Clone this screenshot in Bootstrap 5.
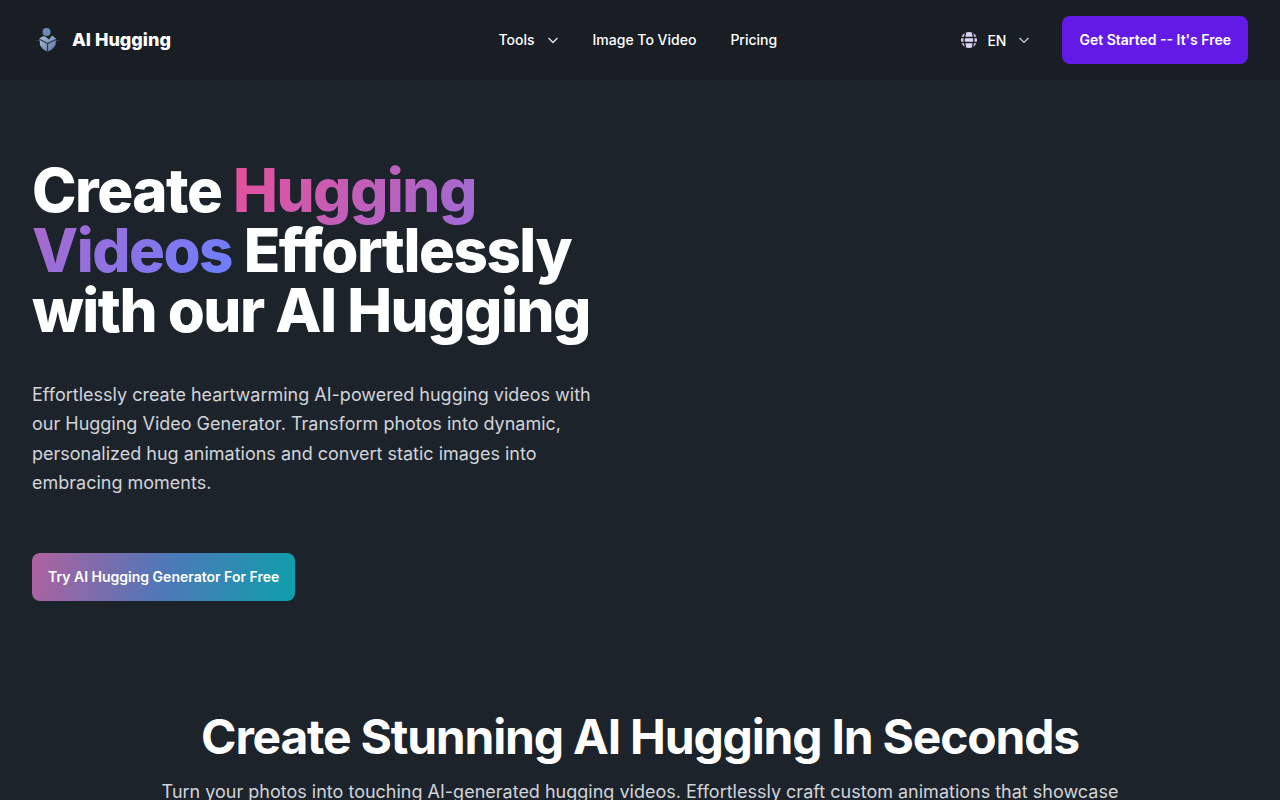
<!doctype html>
<html lang="en">
<head>
<meta charset="utf-8">
<title>AI Hugging</title>
<link rel="stylesheet" href="https://cdn.jsdelivr.net/npm/bootstrap@5.3.0/dist/css/bootstrap.min.css">
<style>
html,body{height:800px;overflow:hidden}
body{background:#1d232a;font-family:Inter,"Liberation Sans",sans-serif;color:#fff}
.topbar{height:80px;background:#191e25;padding:0 32px}
.brandname{font-size:18px;font-weight:800;line-height:28px;color:#fff}
.brandlink{gap:12px;text-decoration:none;width:139px}
.menuwrap{gap:34px;margin-left:327.5px}
.menuitem{font-size:14px;font-weight:550;line-height:20px;color:#fff;text-decoration:none}
.globeicon{margin-right:9px}
.langname{margin-right:12px}
.langbox{margin-right:32px;font-size:14px;font-weight:550}
.startbtn{background:#641ae6;color:#fff;font-size:14px;font-weight:600;line-height:20px;height:48px;padding:0 17px;border:0;border-radius:8px;display:flex;align-items:center}
.startbtn:hover{background:#641ae6;color:#fff}
.herobox{padding:80px 32px 0}
.herotitle{width:600px;font-size:60px;line-height:60px;font-weight:800;letter-spacing:-1.5px;margin:0;color:#fff}
.gradtext{background:linear-gradient(125deg,#e84f98 0%,#6b80ff 100%);-webkit-background-clip:text;background-clip:text;color:transparent}
.herotext{width:576px;margin:40px 0 0;font-size:18px;line-height:29.25px;color:#d1d5db;font-weight:400}
.trybtn{margin-top:56px;height:48px;padding:0 16px 2px;border:0;border-radius:8px;background:linear-gradient(100deg,#b0619f 0%,#4f77b8 50%,#0f9fab 100%);color:#fff;font-size:14px;font-weight:600;display:inline-flex;align-items:center}
.trybtn:hover{color:#fff}
.sectionbox{padding-top:106px;text-align:center}
.sectiontitle{font-size:48px;line-height:60px;font-weight:700;letter-spacing:-1.2px;margin:0;color:#fff}
.sectiontext{width:1000px;margin:11px auto 0;font-size:18px;line-height:28px;color:#d1d5db}
</style>
</head>
<body>
<nav class="topbar d-flex align-items-center">
  <a class="brandlink d-flex align-items-center" href="#">
    <svg width="28" height="28" viewBox="0 0 28 28" aria-hidden="true">
      <defs><linearGradient id="logofill" x1="0" y1="0" x2="1" y2="1"><stop offset="0" stop-color="#a9bedb"/><stop offset="1" stop-color="#5d789f"/></linearGradient></defs>
      <path d="M4 14.500H7.500M24 14.500H27" stroke="#39455a" stroke-width=".8"/>
      <circle cx="14.500" cy="6" r="4" fill="#6f8bb2"/>
      <path d="M7.500 12.500Q11 9 14 11L17 13.500L20 9.500L24 12.500L23.500 19Q20.500 24 15.500 25.500Q10.500 24 8 19Z" fill="url(#logofill)"/>
      <path d="M8 13.500L15.500 17.500L24 13.500M15.500 17.500V25.500" fill="none" stroke="#2c3749" stroke-width="1.200"/>
    </svg>
    <span class="brandname">AI Hugging</span>
  </a>
  <div class="menuwrap d-flex align-items-center">
    <a class="menuitem d-flex align-items-center gap-2" href="#">Tools
      <svg class="ms-1" width="12" height="12" viewBox="0 0 12 12" aria-hidden="true"><path d="M1.500 4l4.500 4.500L10.500 4" fill="none" stroke="#e5e7eb" stroke-width="1.300"/></svg>
    </a>
    <a class="menuitem" href="#">Image To Video</a>
    <a class="menuitem" href="#">Pricing</a>
  </div>
  <div class="ms-auto d-flex align-items-center">
    <div class="langbox d-flex align-items-center">
      <svg class="globeicon" width="18" height="18" viewBox="0 0 18 18" aria-hidden="true">
        <circle cx="9" cy="9" r="8" fill="#ddd3f7"/>
        <path d="M1 6.500H17M1 11.500H17M5.500 1.500L4 9L5.500 16.500M12.500 1.500L14 9L12.500 16.500" fill="none" stroke="#191e25" stroke-width="1.400"/>
      </svg>
      <span class="langname">EN</span>
      <svg width="12" height="12" viewBox="0 0 12 12" aria-hidden="true"><path d="M1.500 4l4.500 4.500L10.500 4" fill="none" stroke="#d1d5db" stroke-width="1.200"/></svg>
    </div>
    <a class="btn startbtn" href="#">Get Started -- It's Free</a>
  </div>
</nav>
<main>
  <section class="herobox">
    <h1 class="herotitle">Create <span class="gradtext">Hugging Videos</span> Effortlessly with our AI Hugging</h1>
    <p class="herotext">Effortlessly create heartwarming AI-powered hugging videos with our Hugging Video Generator. Transform photos into dynamic, personalized hug animations and convert static images into embracing moments.</p>
    <a class="btn trybtn" href="#">Try AI Hugging Generator For Free</a>
  </section>
  <section class="sectionbox">
    <h2 class="sectiontitle">Create Stunning AI Hugging In Seconds</h2>
    <p class="sectiontext">Turn your photos into touching AI-generated hugging videos. Effortlessly craft custom animations that showcase</p>
  </section>
</main>
<script src="https://cdn.jsdelivr.net/npm/bootstrap@5.3.0/dist/js/bootstrap.bundle.min.js"></script>
</body>
</html>
